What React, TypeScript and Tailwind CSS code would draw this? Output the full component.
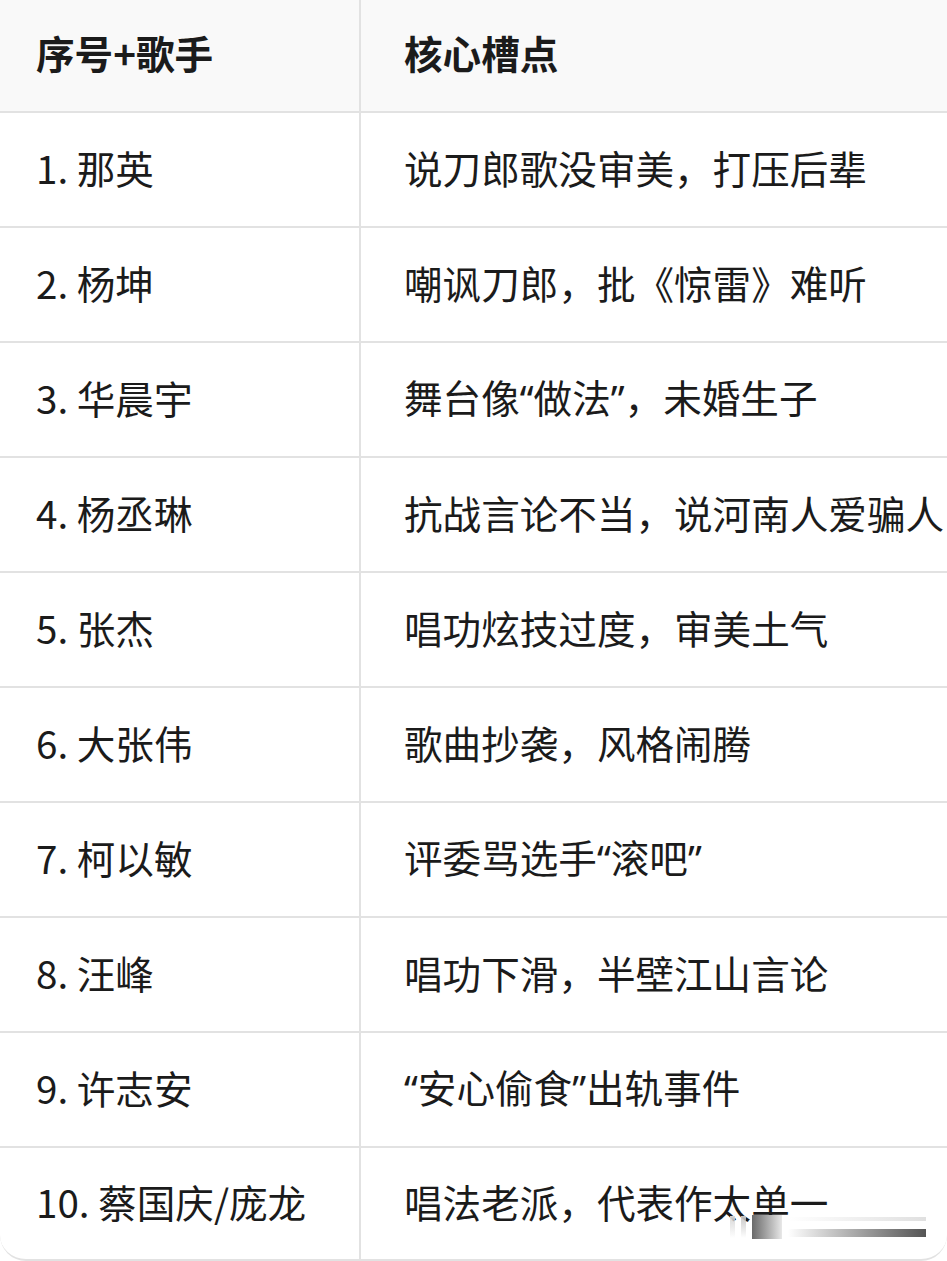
const ROWS: [string, string][] = [
  ["1. 那英", "说刀郎歌没审美，打压后辈"],
  ["2. 杨坤", "嘲讽刀郎，批《惊雷》难听"],
  ["3. 华晨宇", "舞台像“做法”，未婚生子"],
  ["4. 杨丞琳", "抗战言论不当，说河南人爱骗人"],
  ["5. 张杰", "唱功炫技过度，审美土气"],
  ["6. 大张伟", "歌曲抄袭，风格闹腾"],
  ["7. 柯以敏", "评委骂选手“滚吧”"],
  ["8. 汪峰", "唱功下滑，半壁江山言论"],
  ["9. 许志安", "“安心偷食”出轨事件"],
  ["10. 蔡国庆/庞龙", "唱法老派，代表作太单一"],
];

// curly quotes are set half-width in the source, so give them a latin face
function Text({ value }: { value: string }) {
  return (
    <>
      {value.split(/([“”])/).map((part, i) =>
        part === "“" || part === "”" ? (
          <span key={i} style={{ fontFamily: '"Noto Sans", sans-serif' }}>
            {part}
          </span>
        ) : (
          part
        ),
      )}
    </>
  );
}

export default function App() {
  return (
    <div
      className="relative h-[1261px] w-[947px] overflow-hidden bg-white text-[38.6px] text-[#1b1b1b]"
      style={{ fontFamily: '"Noto Sans CJK SC", "Noto Sans", sans-serif' }}
    >
      <div className="overflow-hidden rounded-b-[26px] border-b-2 border-[#e2e2e2]">
        <div className="grid h-[113px] grid-cols-[361px_1fr] border-b-2 border-[#e2e2e2] bg-[#f9f9f9] font-bold">
          <div className="flex items-center border-r-2 border-[#e2e2e2] pb-[6px] pl-[36px]">序号+歌手</div>
          <div className="flex items-center pb-[6px] pl-[43px]">核心槽点</div>
        </div>
        {ROWS.map(([name, note], i) => (
          <div
            key={i}
            className={`grid grid-cols-[361px_1fr] ${i < ROWS.length - 1 ? "h-[115px] border-b-2 border-[#e2e2e2]" : "h-[111px]"}`}
          >
            <div className="flex items-center whitespace-nowrap border-r-2 border-[#e2e2e2] pb-[4px] pl-[36px]">{name}</div>
            <div className="flex items-center overflow-hidden whitespace-nowrap pb-[4px] pl-[43px]">
              <span>
                <Text value={note} />
              </span>
            </div>
          </div>
        ))}
      </div>
      {/* faint watermark smear at the bottom right */}
      <div className="absolute left-[730px] top-[1215px] flex h-[24px] w-[196px] items-center gap-[6px]">
        <div className="h-[22px] w-[5px] bg-gradient-to-b from-[#d8d8d8] to-transparent" />
        <div className="h-[22px] w-[5px] bg-gradient-to-b from-[#c8c8c8] to-transparent" />
        <div className="h-[24px] w-[30px] bg-gradient-to-r from-[#6a6a6a] to-[#e8e8e8]" />
        <div className="flex h-[20px] flex-1 flex-col justify-between">
          <div className="h-[4px] bg-gradient-to-r from-white to-[#e0e0e0]" />
          <div className="h-[8px] bg-gradient-to-r from-white to-[#555]" />
        </div>
      </div>
    </div>
  );
}
